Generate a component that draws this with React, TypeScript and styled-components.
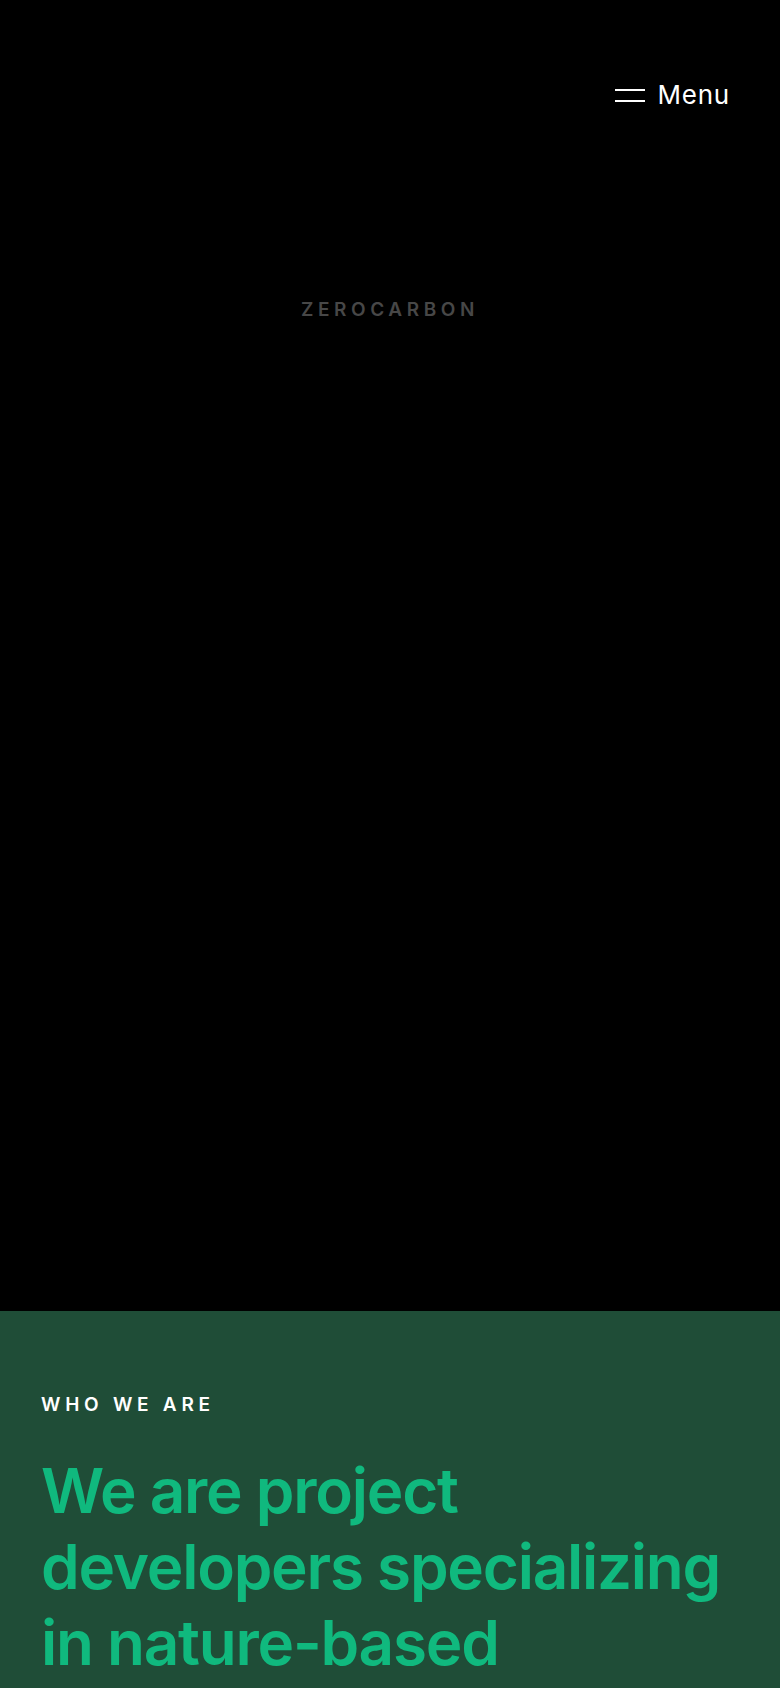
import { createGlobalStyle, styled } from 'styled-components';

const GlobalStyle = createGlobalStyle`
    html, body {
        margin: 0;
        padding: 0;
        background: #000;
    }

    body {
        font-family: Inter, "Noto Sans", sans-serif;
        -webkit-font-smoothing: antialiased;
    }
`;

const Page = styled.div`
    width: 780px;
    min-height: 1688px;
    overflow: hidden;
`;

const Hero = styled.section`
    height: 1311px;
    background: #000;
    display: flex;
    flex-direction: column;
`;

const Header = styled.header`
    display: flex;
    justify-content: flex-end;
    padding: 80px 50px 0 0;
`;

const MenuButton = styled.button`
    display: flex;
    align-items: center;
    gap: 13px;
    background: none;
    border: 0;
    padding: 0;
    color: #fff;
    font-family: Inter, sans-serif;
    font-size: 26px;
    font-weight: 400;
    letter-spacing: 0.03em;
    line-height: 30px;
    cursor: pointer;
`;

const Burger = styled.span`
    display: flex;
    flex-direction: column;
    gap: 9px;
    width: 30px;

    span {
        display: block;
        height: 2px;
        background: #fff;
    }
`;

const Logo = styled.div`
    margin-top: 188px;
    text-align: center;
    color: #474747;
    font-size: 19px;
    font-weight: 600;
    letter-spacing: 0.24em;
`;

const About = styled.section`
    background: #1f4d37;
    padding: 84px 41px 0;
    min-height: 377px;
`;

const Eyebrow = styled.h2`
    margin: 0;
    color: #fff;
    font-size: 19px;
    font-weight: 600;
    letter-spacing: 0.25em;
    line-height: 20px;
`;

const Headline = styled.p`
    margin: 38px 0 0;
    color: #10b97e;
    font-size: 62px;
    font-weight: 600;
    line-height: 76px;
    letter-spacing: -0.02em;
`;

export default function App() {
    return (
        <Page>
            <GlobalStyle />
            <Hero>
                <Header>
                    <MenuButton>
                        <Burger>
                            <span />
                            <span />
                        </Burger>
                        Menu
                    </MenuButton>
                </Header>
                <Logo>ZEROCARBON</Logo>
            </Hero>
            <About>
                <Eyebrow>WHO WE ARE</Eyebrow>
                <Headline>
                    We are project developers specializing in nature-based
                    solutions
                </Headline>
            </About>
        </Page>
    );
}
